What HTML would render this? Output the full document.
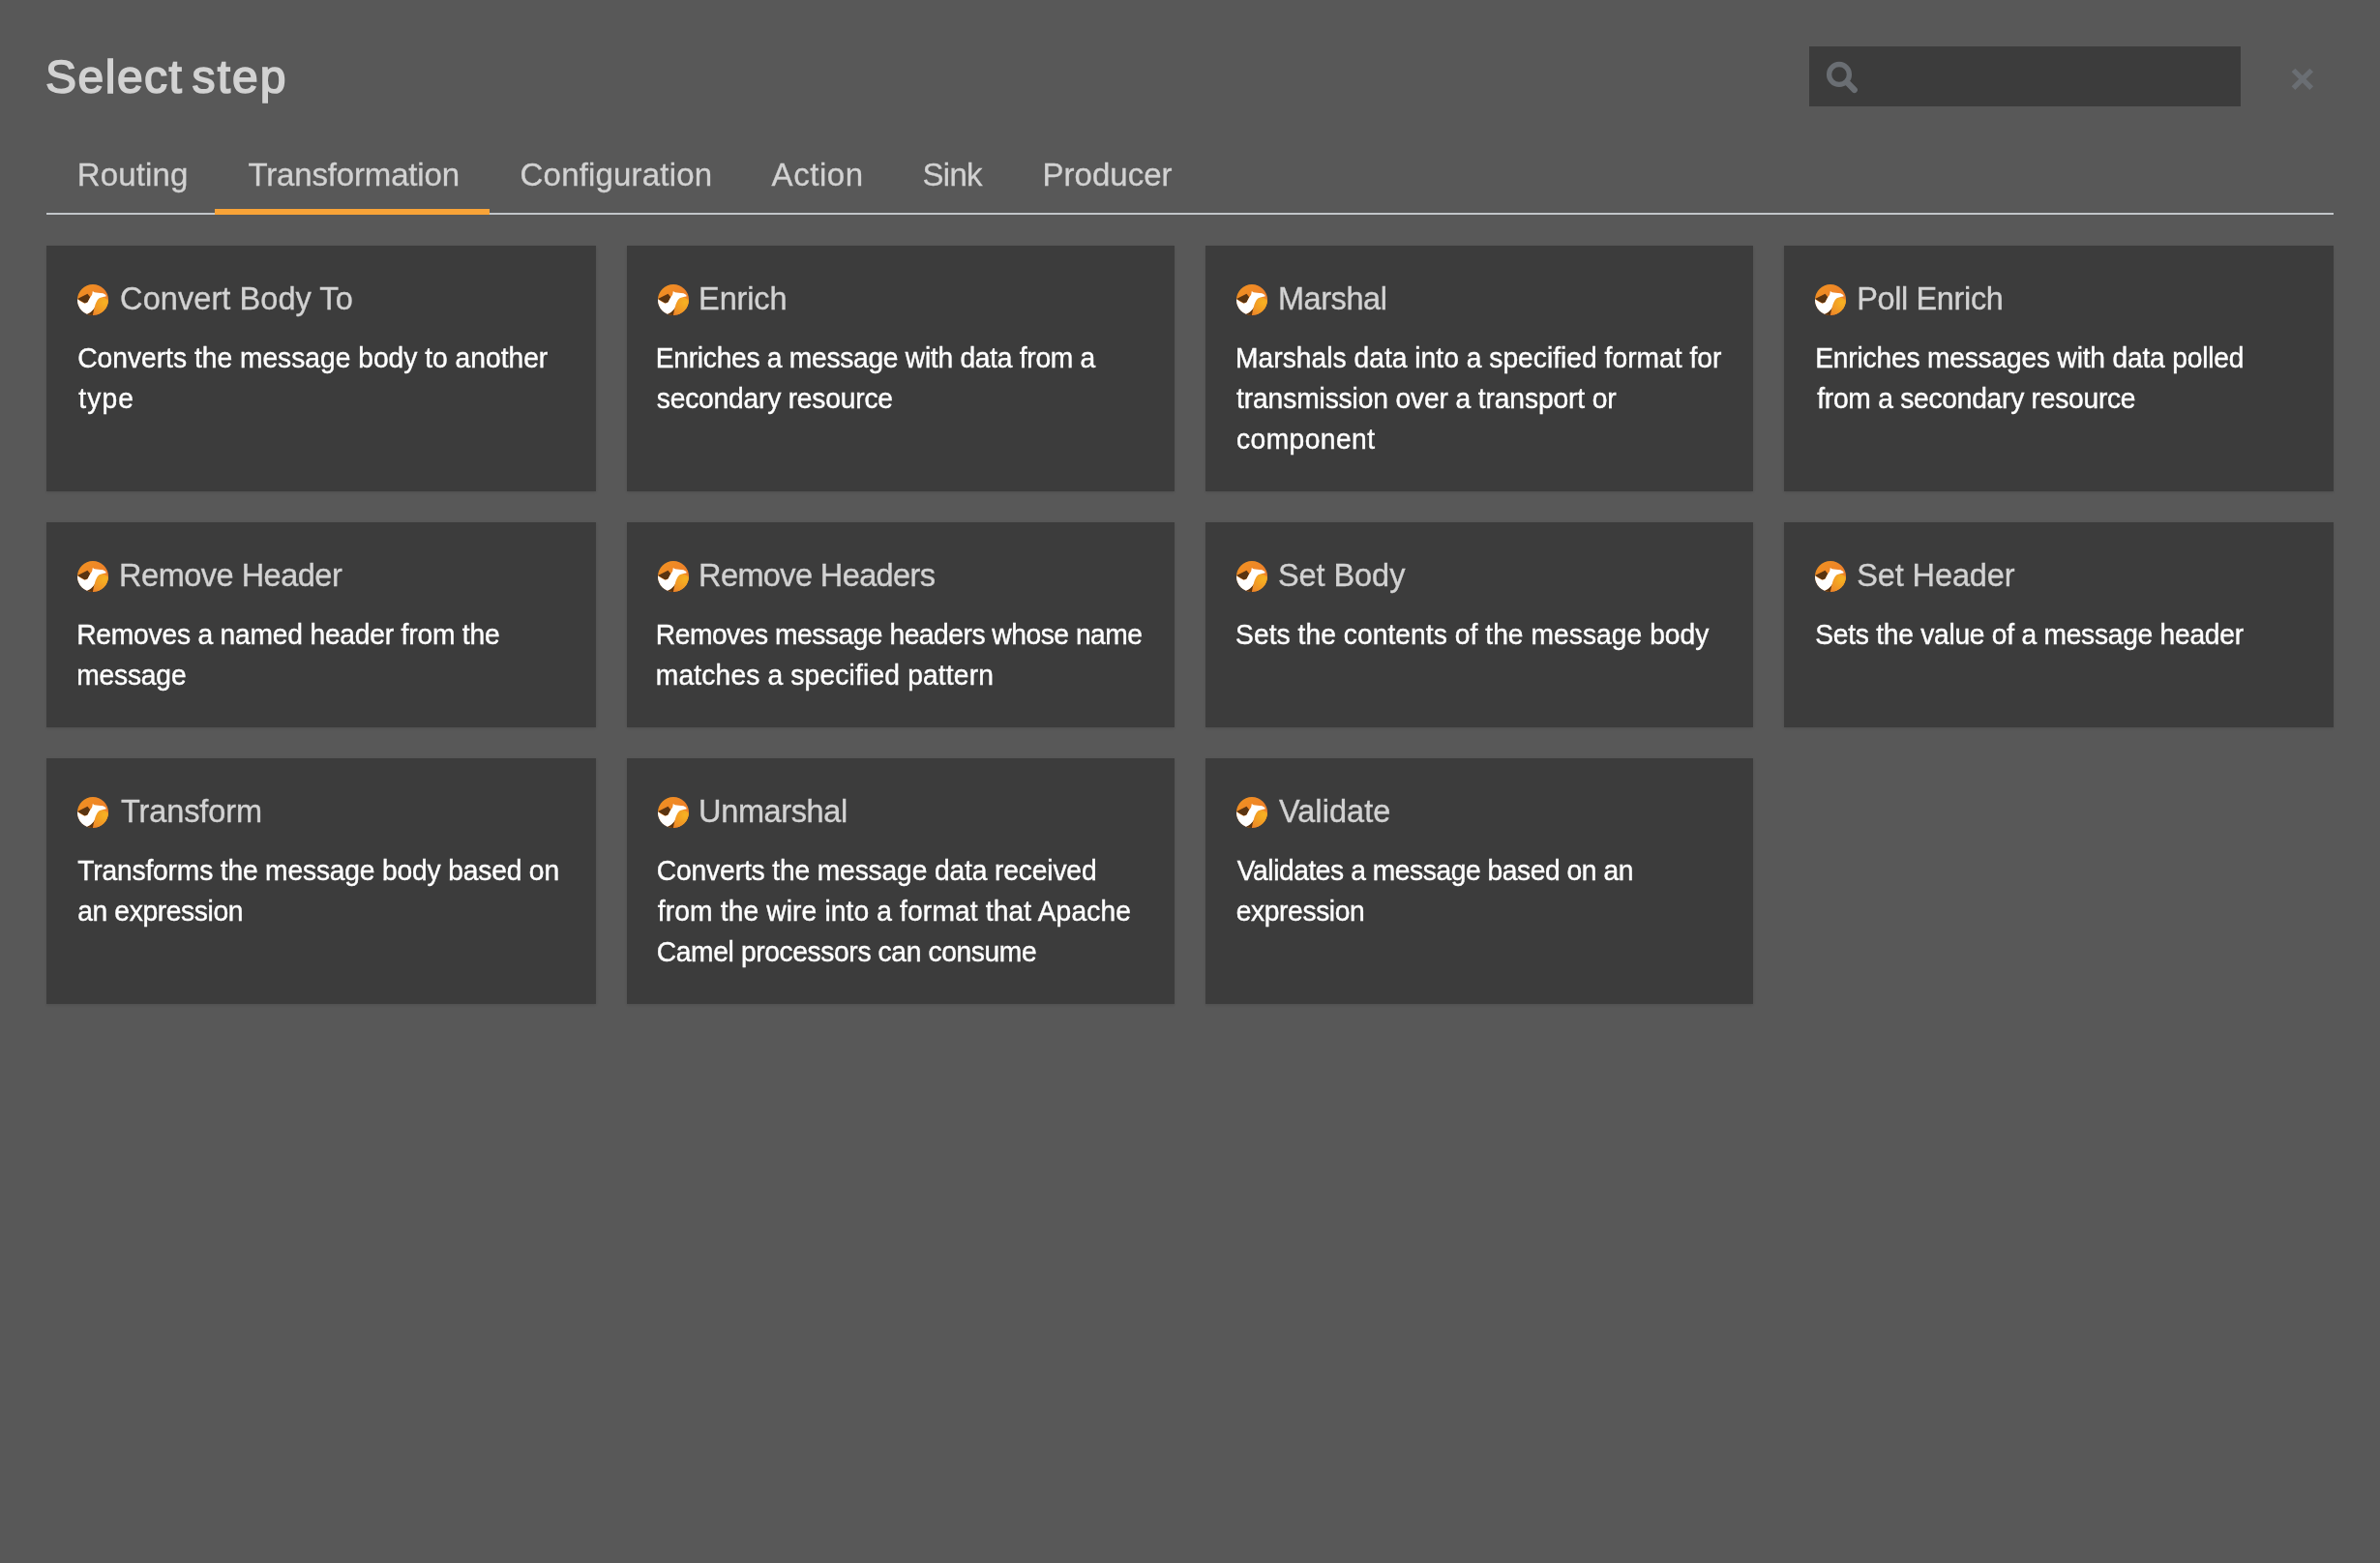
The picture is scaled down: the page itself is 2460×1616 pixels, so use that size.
<!DOCTYPE html>
<html><head><meta charset="utf-8"><style>
html,body{margin:0;padding:0}
body{width:2460px;height:1616px;background:#585858;position:relative;overflow:hidden;font-family:"Liberation Sans",sans-serif}
#root{position:absolute;left:0;top:0;width:2460px;height:1616px;will-change:transform}
.title{position:absolute;left:48px;top:50px;font-size:48px;font-weight:400;-webkit-text-stroke:1.6px #d2d2d2;letter-spacing:0.9px;color:#d2d2d2;line-height:60px;white-space:nowrap}
.search{position:absolute;left:1870px;top:48px;width:446px;height:62px;background:#3c3c3c}
.sicon{position:absolute;left:1880px;top:56px}
.close{position:absolute;left:2360px;top:62px}
.tabline{position:absolute;left:48px;top:220px;width:2364px;height:2px;background:#c2c6ca}
.tabsel{position:absolute;left:222px;top:216px;width:284px;height:6px;background:#f8a337}
.tab{position:absolute;top:157px;font-size:33px;color:#d2d2d2;line-height:48px;white-space:nowrap;-webkit-text-stroke:0.3px #d2d2d2;transform:scaleY(1.02);transform-origin:0 35.4px}
.card{position:absolute;background:#3c3c3c;box-shadow:0 1px 3px rgba(0,0,0,0.10)}
.ic{position:absolute;left:32px;top:40px}
.ct{position:absolute;left:76.3px;top:31px;font-size:32.5px;line-height:48px;color:#d2d2d2;white-space:nowrap;-webkit-text-stroke:0.35px #d2d2d2;transform:scaleY(1.05);transform-origin:0 35.3px}
.cd{position:absolute;left:32px;font-size:28.2px;line-height:42px;color:#ffffff;white-space:nowrap;-webkit-text-stroke:0.4px #ffffff;transform:scaleY(1.07);transform-origin:0 30.8px}
</style></head><body><svg width="0" height="0" style="position:absolute"><defs>
<linearGradient id="og" x1="0" y1="0" x2="1" y2="1"><stop offset="0" stop-color="#f19320"/><stop offset="0.6" stop-color="#ee812a"/><stop offset="1" stop-color="#f08a24"/></linearGradient>
<radialGradient id="yg" cx="0.7" cy="0.3" r="0.8"><stop offset="0" stop-color="#f6b322"/><stop offset="0.55" stop-color="#f29c24"/><stop offset="1" stop-color="#ee8a28"/></radialGradient>
<clipPath id="cc"><circle cx="16" cy="16" r="16"/></clipPath>
<symbol id="camel" viewBox="0 0 32 32"><g clip-path="url(#cc)"><rect width="32" height="32" fill="url(#og)"/><circle cx="24.2" cy="22.6" r="9.6" fill="url(#yg)"/><path d="M0 15 L10.5 9.8 L13.2 13.2 L10.6 18.6 L7.6 19.6 Z" fill="#5a3411"/><path d="M17.9 23 C16.8 26.5 12.5 29.6 8.2 31.6 L8 32 L15.9 32 L16.6 28 Z" fill="#583310"/><path d="M0 15.3 C3 17.2 5.5 19.2 7.8 19.8 L10.6 18.6 C11.8 16.5 12.8 13.8 14.6 11.6 C15.4 10.3 15.5 8.4 15.8 6.9 L17.6 8.3 C20 8.9 23 8.8 26.5 9.3 L29.4 11 L29.5 12.6 C27 13.1 24.4 13.3 22.2 14.5 C20 16.4 18.7 20 17.8 23.4 C16.6 26.8 12.6 29.8 8.4 31.4 L0 32 Z" fill="#ffffff"/></g></symbol>
</defs></svg><div id="root">
<div class="title" style="left:47.00px;letter-spacing:1.500px">Select</div><div class="title" style="left:198.60px;letter-spacing:2.033px">step</div>
<div class="search"></div>
<svg class="sicon" width="50" height="50" viewBox="0 0 50 50"><circle cx="21" cy="20.9" r="10.4" fill="none" stroke="#6a6e73" stroke-width="5.3"/><path d="M29.5 29.5 L36.8 37" stroke="#6a6e73" stroke-width="6.2" stroke-linecap="round"/></svg>
<svg class="close" width="40" height="40" viewBox="0 0 40 40"><path d="M10.5 10.5 L29.2 29.2 M29.2 10.5 L10.5 29.2" stroke="#6a6e73" stroke-width="5.3"/></svg>
<div class="tabline"></div><div class="tabsel"></div>
<div class="tab" style="left:79.80px;letter-spacing:0.133px">Routing</div><div class="tab" style="left:256.40px;letter-spacing:-0.154px">Transformation</div><div class="tab" style="left:537.60px;letter-spacing:0.183px">Configuration</div><div class="tab" style="left:797.60px;letter-spacing:0.560px">Action</div><div class="tab" style="left:953.40px;letter-spacing:-0.667px">Sink</div><div class="tab" style="left:1077.60px;letter-spacing:0.000px">Producer</div>
<div class="card" style="left:48px;top:254px;width:568px;height:254px"><svg class="ic" width="32" height="32"><use href="#camel"/></svg><div class="ct" style="left:76.10px;letter-spacing:0.071px">Convert Body To</div><div class="cd" style="left:32.20px;top:95px;letter-spacing:0.009px">Converts the message body to another</div><div class="cd" style="left:33.20px;top:137px;letter-spacing:1.133px">type</div></div><div class="card" style="left:648px;top:254px;width:566px;height:254px"><svg class="ic" width="32" height="32"><use href="#camel"/></svg><div class="ct" style="left:74.10px;letter-spacing:-0.140px">Enrich</div><div class="cd" style="left:29.80px;top:95px;letter-spacing:-0.274px">Enriches a message with data from a</div><div class="cd" style="left:30.80px;top:137px;letter-spacing:-0.200px">secondary resource</div></div><div class="card" style="left:1246px;top:254px;width:566px;height:254px"><svg class="ic" width="32" height="32"><use href="#camel"/></svg><div class="ct" style="left:74.90px;letter-spacing:-0.433px">Marshal</div><div class="cd" style="left:31.10px;top:95px;letter-spacing:0.025px">Marshals data into a specified format for</div><div class="cd" style="left:32.10px;top:137px;letter-spacing:-0.123px">transmission over a transport or</div><div class="cd" style="left:32.10px;top:179px;letter-spacing:0.425px">component</div></div><div class="card" style="left:1844px;top:254px;width:568px;height:254px"><svg class="ic" width="32" height="32"><use href="#camel"/></svg><div class="ct" style="left:75.20px;letter-spacing:-0.370px">Poll Enrich</div><div class="cd" style="left:32.20px;top:95px;letter-spacing:-0.194px">Enriches messages with data polled</div><div class="cd" style="left:34.20px;top:137px;letter-spacing:-0.246px">from a secondary resource</div></div><div class="card" style="left:48px;top:540px;width:568px;height:212px"><svg class="ic" width="32" height="32"><use href="#camel"/></svg><div class="ct" style="left:75.10px;letter-spacing:-0.500px">Remove Header</div><div class="cd" style="left:31.20px;top:95px;letter-spacing:-0.200px">Removes a named header from the</div><div class="cd" style="left:31.20px;top:137px;letter-spacing:-0.167px">message</div></div><div class="card" style="left:648px;top:540px;width:566px;height:212px"><svg class="ic" width="32" height="32"><use href="#camel"/></svg><div class="ct" style="left:74.10px;letter-spacing:-0.615px">Remove Headers</div><div class="cd" style="left:29.80px;top:95px;letter-spacing:-0.467px">Removes message headers whose name</div><div class="cd" style="left:29.80px;top:137px;letter-spacing:0.169px">matches a specified pattern</div></div><div class="card" style="left:1246px;top:540px;width:566px;height:212px"><svg class="ic" width="32" height="32"><use href="#camel"/></svg><div class="ct" style="left:74.90px;letter-spacing:-0.057px">Set Body</div><div class="cd" style="left:31.10px;top:95px;letter-spacing:0.056px">Sets the contents of the message body</div></div><div class="card" style="left:1844px;top:540px;width:568px;height:212px"><svg class="ic" width="32" height="32"><use href="#camel"/></svg><div class="ct" style="left:75.20px;letter-spacing:-0.111px">Set Header</div><div class="cd" style="left:32.20px;top:95px;letter-spacing:-0.255px">Sets the value of a message header</div></div><div class="card" style="left:48px;top:784px;width:568px;height:254px"><svg class="ic" width="32" height="32"><use href="#camel"/></svg><div class="ct" style="left:77.10px;letter-spacing:-0.125px">Transform</div><div class="cd" style="left:32.20px;top:95px;letter-spacing:-0.160px">Transforms the message body based on</div><div class="cd" style="left:32.20px;top:137px;letter-spacing:-0.350px">an expression</div></div><div class="card" style="left:648px;top:784px;width:566px;height:254px"><svg class="ic" width="32" height="32"><use href="#camel"/></svg><div class="ct" style="left:74.10px;letter-spacing:-0.375px">Unmarshal</div><div class="cd" style="left:30.80px;top:95px;letter-spacing:-0.130px">Converts the message data received</div><div class="cd" style="left:31.80px;top:137px;letter-spacing:0.132px">from the wire into a format that Apache</div><div class="cd" style="left:30.80px;top:179px;letter-spacing:-0.363px">Camel processors can consume</div></div><div class="card" style="left:1246px;top:784px;width:566px;height:254px"><svg class="ic" width="32" height="32"><use href="#camel"/></svg><div class="ct" style="left:75.90px;letter-spacing:0.071px">Validate</div><div class="cd" style="left:32.80px;top:95px;letter-spacing:-0.433px">Validates a message based on an</div><div class="cd" style="left:31.80px;top:137px;letter-spacing:-0.378px">expression</div></div>
</div></body></html>
